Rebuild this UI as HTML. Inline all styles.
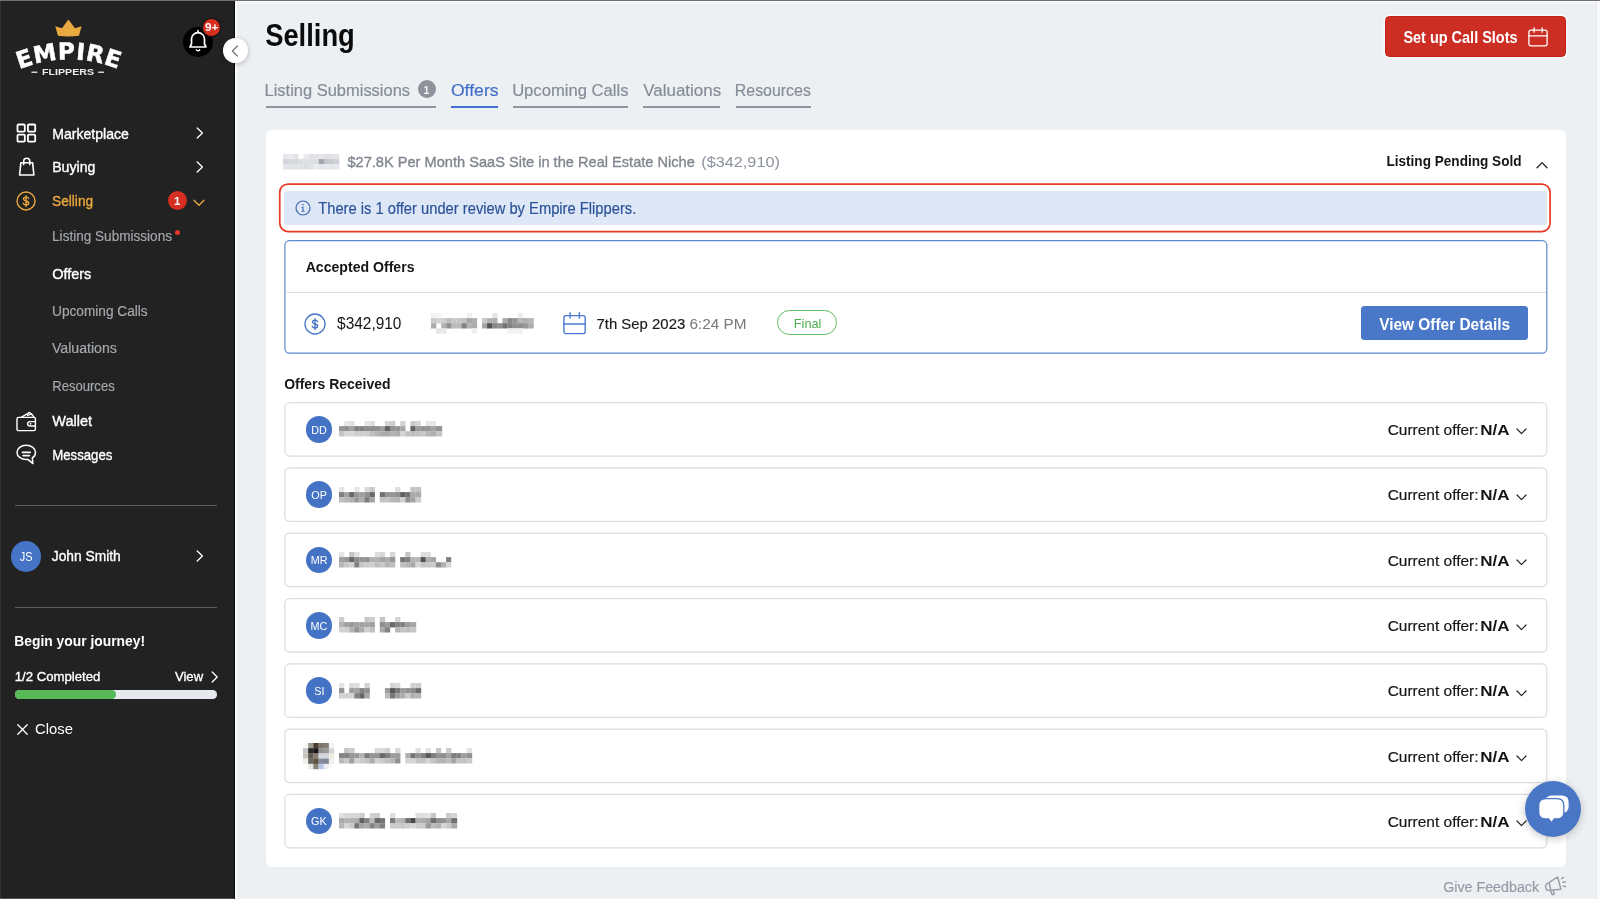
<!DOCTYPE html>
<html lang="en">
<head>
<meta charset="utf-8">
<title>Selling - Offers</title>
<style>
*{box-sizing:border-box;margin:0;padding:0}
html,body{width:1600px;height:899px;overflow:hidden;background:#edf0f3;font-family:"Liberation Sans",sans-serif;color:#111}
body{position:relative}
.abs{position:absolute}
svg{position:absolute;overflow:visible}
.t{position:absolute;white-space:nowrap;line-height:20px;height:20px;transform-origin:0 50%}
#txt{position:absolute;left:0;top:0;width:1600px;height:899px;will-change:transform;z-index:7}
#topline{position:absolute;left:0;top:0;width:1600px;height:1px;background:#6e6f72;z-index:50}
#rightstrip{position:absolute;left:1597px;top:1px;width:3px;height:898px;background:#f9f9f9;z-index:40}
#side{position:absolute;left:0;top:0;width:235px;height:899px;background:#222222}
.hr{position:absolute;left:15px;width:202px;height:1px;background:#5b5d5f}
#card{position:absolute;left:266px;top:130px;width:1300px;height:737.3px;background:#fff;border-radius:6px}
.tabline{position:absolute;height:2.1px;background:#9096a0;top:105.9px}
.row{position:absolute;left:284.3px;width:1263px;height:54.7px;border:1px solid #d9dce2;border-radius:5px;background:#fff}
.av{position:absolute;width:26.4px;height:26.4px;border-radius:50%;background:#4472c4}
.px{position:absolute;filter:blur(1.2px)}
</style>
</head>
<body>
<div id="side">
<div class="abs" style="left:0;top:0;width:1px;height:899px;background:#333"></div>
<!-- logo -->
<svg style="left:10px;top:14px;will-change:transform" width="120" height="68" viewBox="10 14 120 68">
  <path d="M58 35.7 L55.2 26.2 L62 28.2 L68.4 19.6 L75 28.2 L81.6 26.2 L79 35.7 Q68.5 37.2 58 35.7 Z" fill="#eaa840"/>
  <path id="arc" d="M17 70.2 Q68.9 48.6 120.8 70.2" fill="none"/>
  <text font-family="DejaVu Sans, Liberation Sans, sans-serif" font-weight="bold" font-size="23.2" fill="#fff" stroke="#fff" stroke-width="0.5" letter-spacing="0.6"><textPath href="#arc" startOffset="50%" text-anchor="middle">EMPIRE</textPath></text>
  <rect x="31.4" y="71.6" width="6" height="1.5" rx="0.5" fill="#d2d2d2"/>
  <rect x="98.1" y="71.6" width="6" height="1.5" rx="0.5" fill="#d2d2d2"/>
</svg>
<!-- bell -->
<div class="abs" style="left:183px;top:27px;width:30px;height:30px;border-radius:50%;background:#000"></div>
<svg style="left:188px;top:29px" width="20" height="24" viewBox="0 0 20 24" fill="none" stroke="#fff" stroke-width="1.7" stroke-linecap="round" stroke-linejoin="round">
  <path d="M10 1.7 V3 M3.5 15 V10.1 A6.5 6.5 0 0 1 16.5 10.1 V15 L18 18 H2 Z" fill="#000"/>
  <path d="M8.4 20.9 Q10 22.6 11.6 20.9" stroke-width="1.5"/>
</svg>
<div class="abs" style="left:202.9px;top:18.5px;width:17.4px;height:17.4px;border-radius:50%;background:#d8301f;box-shadow:0 0 0 1.3px #161616"></div>
<!-- nav icons -->
<svg style="left:16px;top:123.4px" width="21" height="20" viewBox="0 0 21 20" fill="none" stroke="#fff" stroke-width="1.8">
  <rect x="1.5" y="1.5" width="7.3" height="7.2" rx="0.9"/><rect x="11.9" y="1.5" width="7.3" height="7.2" rx="0.9"/>
  <rect x="1.5" y="11.7" width="7.3" height="7.0" rx="0.9"/><rect x="11.9" y="11.7" width="7.3" height="7.0" rx="0.9"/>
</svg>
<svg style="left:18px;top:156px" width="18" height="21" viewBox="0 0 18 21" fill="none" stroke="#fff" stroke-width="1.6" stroke-linejoin="round" stroke-linecap="round">
  <path d="M2.9 6.7 H14.6 L15.9 19 H1.6 Z"/>
  <path d="M5.7 8.6 V5.2 C5.7 3.2 6.9 2.2 8.75 2.2 C10.6 2.2 11.8 3.2 11.8 5.2 V8.6"/>
</svg>
<svg style="left:16px;top:190.5px" width="20" height="20" viewBox="0 0 20 20" fill="none" stroke="#eaa93f" stroke-width="1.4" stroke-linecap="round">
  <circle cx="10.05" cy="10" r="9"/>
  <path d="M12.6 7.6 C12.2 6.6 11.3 6.1 10 6.1 C8.5 6.1 7.5 6.9 7.5 8 C7.5 9.2 8.5 9.6 10 10 C11.6 10.4 12.7 10.9 12.7 12.1 C12.7 13.3 11.6 14 10 14 C8.6 14 7.6 13.4 7.2 12.3 M10 4.7 V15.5"/>
</svg>
<!-- chevrons -->
<svg style="left:196.35px;top:127.15px" width="8" height="12" viewBox="0 0 8 12" fill="none" stroke="#fff" stroke-width="1.3" stroke-linecap="round" stroke-linejoin="round"><path d="M1.2 1 L6.4 6 L1.2 11"/></svg>
<svg style="left:196.35px;top:160.9px" width="8" height="12" viewBox="0 0 8 12" fill="none" stroke="#fff" stroke-width="1.3" stroke-linecap="round" stroke-linejoin="round"><path d="M1.2 1 L6.4 6 L1.2 11"/></svg>
<div class="abs" style="left:167.8px;top:190.9px;width:19.4px;height:19.4px;border-radius:50%;background:#d62e20"></div>
<svg style="left:192.75px;top:198.85px" width="12" height="8" viewBox="0 0 12 8" fill="none" stroke="#eaa93f" stroke-width="1.3" stroke-linecap="round" stroke-linejoin="round"><path d="M1 1.2 L6 6.2 L11 1.2"/></svg>
<div class="abs" style="left:175px;top:230.1px;width:5px;height:5px;border-radius:50%;background:#e8392c"></div>
<!-- wallet -->
<svg style="left:16px;top:410.5px" width="21" height="21" viewBox="0 0 21 21" fill="none" stroke="#fff" stroke-width="1.4" stroke-linejoin="round" stroke-linecap="round">
  <path d="M2.6 6.4 H17.8 Q19.4 6.4 19.4 8 V18 Q19.4 19.6 17.8 19.6 H2.6 Q1 19.6 1 18 V8 Q1 6.4 2.6 6.4 Z"/>
  <path d="M5.6 6.2 L13.6 1.4 L15.4 3.4 M11.6 4.4 L15.6 2.8 L18 6.2"/>
  <path d="M19.4 10.6 H14 Q11.6 10.6 11.6 12.8 Q11.6 15 14 15 H19.4"/>
  <circle cx="14.6" cy="12.8" r="0.9" fill="#fff" stroke="none"/>
</svg>
<!-- messages -->
<svg style="left:16px;top:443.6px" width="21" height="21" viewBox="0 0 21 21" fill="none" stroke="#fff" stroke-width="1.5" stroke-linejoin="round" stroke-linecap="round">
  <path d="M10.2 1.3 C15.4 1.3 19.5 4.4 19.5 8.4 C19.5 10.8 18.3 12.6 16.3 13.9 L16.9 19.6 L11.9 15.4 C11.3 15.5 10.8 15.5 10.2 15.5 C5 15.5 1 12.4 1 8.4 C1 4.4 5 1.3 10.2 1.3 Z"/>
  <path d="M6.4 8.4 H14.2 M7 11.6 H13.4" stroke-width="1.6"/>
</svg>
<div class="hr" style="top:505px"></div>
<div class="abs" style="left:10.8px;top:541.3px;width:30.4px;height:30.4px;border-radius:50%;background:#4573c5"></div>
<svg style="left:196.35px;top:549.9px" width="8" height="12" viewBox="0 0 8 12" fill="none" stroke="#fff" stroke-width="1.3" stroke-linecap="round" stroke-linejoin="round"><path d="M1.2 1 L6.4 6 L1.2 11"/></svg>
<div class="hr" style="top:606.5px"></div>
<svg style="left:210.65px;top:671.15px" width="8" height="12" viewBox="0 0 8 12" fill="none" stroke="#fff" stroke-width="1.3" stroke-linecap="round" stroke-linejoin="round"><path d="M1.2 1 L6.2 6 L1.2 11"/></svg>
<div class="abs" style="left:14.8px;top:690.3px;width:202.2px;height:8.5px;border-radius:4.3px;background:#e6e9ed"></div>
<div class="abs" style="left:14.8px;top:690.3px;width:101px;height:8.5px;border-radius:4.3px;background:#58b957"></div>
<svg style="left:16.65px;top:724.15px" width="11" height="11" viewBox="0 0 11 11" fill="none" stroke="#fff" stroke-width="1.3" stroke-linecap="round"><path d="M0.8 0.8 L10.2 10.2 M10.2 0.8 L0.8 10.2"/></svg>
</div>
<div class="abs" style="left:233.9px;top:0;width:1px;height:899px;background:#0a0a0a"></div>
<div class="abs" style="left:234.9px;top:0;width:2px;height:899px;background:#fcfdfd"></div>
<!-- collapse button -->
<div class="abs" style="left:223.1px;top:38.3px;width:24.6px;height:24.6px;border-radius:50%;background:#fff;box-shadow:0 1px 5px rgba(0,0,0,.28);z-index:5"></div>
<svg style="left:231.2px;top:44.5px;z-index:6" width="8" height="12" viewBox="0 0 8 12" fill="none" stroke="#777" stroke-width="1.25" stroke-linecap="round" stroke-linejoin="round"><path d="M6.4 1 L1.4 6 L6.4 11"/></svg>
<div id="main">
<!-- top button -->
<div class="abs" style="left:1385.1px;top:15.8px;width:180.8px;height:41px;border-radius:4.5px;background:#cc2e24;border:1px solid #c62012;box-shadow:0 0 0 1.6px rgba(245,255,255,.8)"></div>
<svg style="left:1527.8px;top:26.6px" width="20" height="20" viewBox="0 0 20 20" fill="none" stroke="#fff" stroke-width="1.3" stroke-linecap="round" stroke-linejoin="round">
  <rect x="0.9" y="3.1" width="18.2" height="15.7" rx="2"/><path d="M0.9 8.9 H19.1 M6.1 0.8 V5.2 M14.2 0.8 V5.2"/>
</svg>
<!-- tabs underline -->
<div class="tabline" style="left:266px;width:170.2px"></div>
<div class="tabline" style="left:451.1px;width:47.2px;background:#4170cf"></div>
<div class="tabline" style="left:513.4px;width:114.6px"></div>
<div class="tabline" style="left:643.3px;width:77.2px"></div>
<div class="tabline" style="left:735.8px;width:75.2px"></div>
<div class="abs" style="left:417.5px;top:80.1px;width:18.2px;height:18.2px;border-radius:50%;background:#8d929b"></div>
<div id="card"></div>
<!-- listing thumbnail (blurred) -->
<svg style="left:282.8px;top:154.1px;filter:blur(0.4px)" width="56.2" height="15.3" viewBox="0 0 56.2 15.3"><rect x="0.0" y="0.0" width="5.3" height="5.3" fill="rgb(230,232,237)"/><rect x="5.1" y="0.0" width="5.3" height="5.3" fill="rgb(232,234,239)"/><rect x="10.2" y="0.0" width="5.3" height="5.3" fill="rgb(226,228,233)"/><rect x="20.4" y="0.0" width="5.3" height="5.3" fill="rgb(234,236,241)"/><rect x="25.5" y="0.0" width="5.3" height="5.3" fill="rgb(222,224,229)"/><rect x="30.6" y="0.0" width="5.3" height="5.3" fill="rgb(223,225,230)"/><rect x="35.7" y="0.0" width="5.3" height="5.3" fill="rgb(227,229,234)"/><rect x="40.8" y="0.0" width="5.3" height="5.3" fill="rgb(223,225,230)"/><rect x="45.9" y="0.0" width="5.3" height="5.3" fill="rgb(223,225,230)"/><rect x="51.0" y="0.0" width="5.4" height="5.3" fill="rgb(225,227,232)"/><rect x="0.0" y="5.1" width="5.3" height="5.3" fill="rgb(212,214,219)"/><rect x="5.1" y="5.1" width="5.3" height="5.3" fill="rgb(214,216,221)"/><rect x="10.2" y="5.1" width="5.3" height="5.3" fill="rgb(214,216,221)"/><rect x="15.3" y="5.1" width="5.3" height="5.3" fill="rgb(219,221,226)"/><rect x="20.4" y="5.1" width="5.3" height="5.3" fill="rgb(221,223,228)"/><rect x="25.5" y="5.1" width="5.3" height="5.3" fill="rgb(222,224,229)"/><rect x="30.6" y="5.1" width="5.3" height="5.3" fill="rgb(222,224,229)"/><rect x="35.7" y="5.1" width="5.3" height="5.3" fill="rgb(163,165,170)"/><rect x="40.8" y="5.1" width="5.3" height="5.3" fill="rgb(195,197,202)"/><rect x="45.9" y="5.1" width="5.3" height="5.3" fill="rgb(202,204,209)"/><rect x="51.0" y="5.1" width="5.4" height="5.3" fill="rgb(208,210,215)"/><rect x="0.0" y="10.2" width="5.3" height="5.3" fill="rgb(226,228,233)"/><rect x="5.1" y="10.2" width="5.3" height="5.3" fill="rgb(223,225,230)"/><rect x="10.2" y="10.2" width="5.3" height="5.3" fill="rgb(224,226,231)"/><rect x="15.3" y="10.2" width="5.3" height="5.3" fill="rgb(223,225,230)"/><rect x="20.4" y="10.2" width="5.3" height="5.3" fill="rgb(218,220,225)"/><rect x="25.5" y="10.2" width="5.3" height="5.3" fill="rgb(223,225,230)"/><rect x="30.6" y="10.2" width="5.3" height="5.3" fill="rgb(234,236,241)"/><rect x="35.7" y="10.2" width="5.3" height="5.3" fill="rgb(228,230,235)"/><rect x="40.8" y="10.2" width="5.3" height="5.3" fill="rgb(230,232,237)"/><rect x="45.9" y="10.2" width="5.3" height="5.3" fill="rgb(228,230,235)"/><rect x="51.0" y="10.2" width="5.4" height="5.3" fill="rgb(231,233,238)"/></svg>
<svg style="left:1535.75px;top:160.65px" width="12" height="8" viewBox="0 0 12 8" fill="none" stroke="#222" stroke-width="1.3" stroke-linecap="round" stroke-linejoin="round"><path d="M1 6.8 L6 1.6 L11 6.8"/></svg>
<!-- red outlined alert -->
<svg style="left:0;top:0" width="1600" height="899" viewBox="0 0 1600 899" fill="none"><rect x="279.75" y="184.05" width="1270.3" height="47.5" rx="8.2" stroke="#e83a24" stroke-width="1.7"/></svg>
<div class="abs" style="left:284.3px;top:191.3px;width:1262.4px;height:33.55px;border-radius:3.5px;background:#dee7f6"></div>
<svg style="left:294.9px;top:200px" width="16" height="16" viewBox="0 0 16 16" fill="none" stroke="#3f68b1" stroke-width="1.2" stroke-linecap="round"><circle cx="8" cy="8" r="7"/><path d="M8 7.3 V11.2 M7 7.3 H8 M7 11.3 H9.1" stroke-width="1.1"/><circle cx="7.9" cy="4.8" r="0.8" fill="#3f68b1" stroke="none"/></svg>
<!-- accepted offers box -->
<svg style="left:0;top:0" width="1600" height="899" viewBox="0 0 1600 899" fill="none"><rect x="284.9" y="240.55" width="1261.9" height="112.6" rx="4.6" stroke="#5c87d2" stroke-width="1.2" fill="#fff"/></svg>
<div class="abs" style="left:285.3px;top:292px;width:1261px;height:1px;background:#dadde3"></div>
<svg style="left:303.8px;top:312.5px" width="22" height="22" viewBox="0 0 22 22" fill="none" stroke="#4573c8" stroke-width="1.3" stroke-linecap="round">
  <circle cx="11" cy="11" r="10"/>
  <path d="M13.6 8.6 C13.2 7.6 12.3 7.1 11 7.1 C9.5 7.1 8.5 7.9 8.5 9 C8.5 10.2 9.5 10.6 11 11 C12.6 11.4 13.7 11.9 13.7 13.1 C13.7 14.3 12.6 15 11 15 C9.6 15 8.6 14.4 8.2 13.3 M11 5.6 V16.5"/>
</svg>
<svg style="left:431.4px;top:313.2px;filter:blur(0.5px)" width="102.6" height="20.4" viewBox="0 0 102.6 20.4"><rect x="0.0" y="0.0" width="5.3" height="5.3" fill="rgb(242,242,242)"/><rect x="5.1" y="0.0" width="5.3" height="5.3" fill="rgb(244,244,244)"/><rect x="35.7" y="0.0" width="5.3" height="5.3" fill="rgb(240,240,240)"/><rect x="61.2" y="0.0" width="5.3" height="5.3" fill="rgb(229,229,229)"/><rect x="86.7" y="0.0" width="5.3" height="5.3" fill="rgb(236,236,236)"/><rect x="0.0" y="5.1" width="5.3" height="5.3" fill="rgb(203,203,203)"/><rect x="5.1" y="5.1" width="5.3" height="5.3" fill="rgb(210,210,210)"/><rect x="10.2" y="5.1" width="5.3" height="5.3" fill="rgb(205,205,205)"/><rect x="15.3" y="5.1" width="5.3" height="5.3" fill="rgb(188,188,188)"/><rect x="20.4" y="5.1" width="5.3" height="5.3" fill="rgb(198,198,198)"/><rect x="25.5" y="5.1" width="5.3" height="5.3" fill="rgb(197,197,197)"/><rect x="30.6" y="5.1" width="5.3" height="5.3" fill="rgb(191,191,191)"/><rect x="35.7" y="5.1" width="5.3" height="5.3" fill="rgb(166,166,166)"/><rect x="40.8" y="5.1" width="5.3" height="5.3" fill="rgb(175,175,175)"/><rect x="51.0" y="5.1" width="5.3" height="5.3" fill="rgb(201,201,201)"/><rect x="56.1" y="5.1" width="5.3" height="5.3" fill="rgb(178,178,178)"/><rect x="61.2" y="5.1" width="5.3" height="5.3" fill="rgb(175,175,175)"/><rect x="71.4" y="5.1" width="5.3" height="5.3" fill="rgb(172,172,172)"/><rect x="76.5" y="5.1" width="5.3" height="5.3" fill="rgb(136,136,136)"/><rect x="81.6" y="5.1" width="5.3" height="5.3" fill="rgb(151,151,151)"/><rect x="86.7" y="5.1" width="5.3" height="5.3" fill="rgb(182,182,182)"/><rect x="91.8" y="5.1" width="5.3" height="5.3" fill="rgb(175,175,175)"/><rect x="96.9" y="5.1" width="5.9" height="5.3" fill="rgb(183,183,183)"/><rect x="0.0" y="10.2" width="5.3" height="5.3" fill="rgb(173,173,173)"/><rect x="10.2" y="10.2" width="5.3" height="5.3" fill="rgb(175,175,175)"/><rect x="15.3" y="10.2" width="5.3" height="5.3" fill="rgb(143,143,143)"/><rect x="20.4" y="10.2" width="5.3" height="5.3" fill="rgb(185,185,185)"/><rect x="25.5" y="10.2" width="5.3" height="5.3" fill="rgb(185,185,185)"/><rect x="30.6" y="10.2" width="5.3" height="5.3" fill="rgb(131,131,131)"/><rect x="35.7" y="10.2" width="5.3" height="5.3" fill="rgb(178,178,178)"/><rect x="40.8" y="10.2" width="5.3" height="5.3" fill="rgb(172,172,172)"/><rect x="51.0" y="10.2" width="5.3" height="5.3" fill="rgb(165,165,165)"/><rect x="56.1" y="10.2" width="5.3" height="5.3" fill="rgb(82,82,82)"/><rect x="61.2" y="10.2" width="5.3" height="5.3" fill="rgb(135,135,135)"/><rect x="66.3" y="10.2" width="5.3" height="5.3" fill="rgb(144,144,144)"/><rect x="71.4" y="10.2" width="5.3" height="5.3" fill="rgb(113,113,113)"/><rect x="76.5" y="10.2" width="5.3" height="5.3" fill="rgb(129,129,129)"/><rect x="81.6" y="10.2" width="5.3" height="5.3" fill="rgb(144,144,144)"/><rect x="86.7" y="10.2" width="5.3" height="5.3" fill="rgb(143,143,143)"/><rect x="91.8" y="10.2" width="5.3" height="5.3" fill="rgb(150,150,150)"/><rect x="96.9" y="10.2" width="5.9" height="5.3" fill="rgb(173,173,173)"/><rect x="5.1" y="15.3" width="5.3" height="5.3" fill="rgb(231,231,231)"/><rect x="10.2" y="15.3" width="5.3" height="5.3" fill="rgb(232,232,232)"/><rect x="40.8" y="15.3" width="5.3" height="5.3" fill="rgb(239,239,239)"/><rect x="76.5" y="15.3" width="5.3" height="5.3" fill="rgb(241,241,241)"/><rect x="81.6" y="15.3" width="5.3" height="5.3" fill="rgb(241,241,241)"/><rect x="86.7" y="15.3" width="5.3" height="5.3" fill="rgb(242,242,242)"/></svg>
<svg style="left:562.6px;top:311.8px" width="23" height="23" viewBox="0 0 23 23" fill="none" stroke="#4a7ad0" stroke-width="1.4" stroke-linecap="round" stroke-linejoin="round">
  <rect x="0.9" y="3.6" width="21.3" height="18" rx="2.2"/><path d="M0.9 12 H22.2 M7.1 0.8 V6 M16.4 0.8 V6"/>
</svg>
<div class="abs" style="left:777.4px;top:310.25px;width:59.5px;height:25.15px;border:1px solid #62bd64;border-radius:13px"></div>
<div class="abs" style="left:1360.8px;top:305.9px;width:167.7px;height:33.7px;border-radius:3.5px;background:#4a78c8"></div>
<!-- offer rows inserted by generator -->
<svg style="left:0;top:0" width="1600" height="899" viewBox="0 0 1600 899"><rect x="284.9" y="402.60" width="1261.9" height="53.5" rx="4.6" stroke="#d9dce3" stroke-width="1.2" fill="#fff"/></svg>
<div class="av" style="left:305.85px;top:416.15000000000003px"></div>
<svg style="left:339.2px;top:421.2px;filter:blur(0.5px)" width="103" height="15.3" viewBox="0 0 103 15.3"><rect x="5.1" y="0.0" width="5.3" height="5.3" fill="rgb(231,231,231)"/><rect x="10.2" y="0.0" width="5.3" height="5.3" fill="rgb(224,224,224)"/><rect x="25.5" y="0.0" width="5.3" height="5.3" fill="rgb(228,228,228)"/><rect x="30.6" y="0.0" width="5.3" height="5.3" fill="rgb(223,223,223)"/><rect x="45.9" y="0.0" width="5.3" height="5.3" fill="rgb(213,213,213)"/><rect x="51.0" y="0.0" width="5.3" height="5.3" fill="rgb(206,206,206)"/><rect x="61.2" y="0.0" width="5.3" height="5.3" fill="rgb(210,210,210)"/><rect x="71.4" y="0.0" width="5.3" height="5.3" fill="rgb(202,202,202)"/><rect x="76.5" y="0.0" width="5.3" height="5.3" fill="rgb(214,214,214)"/><rect x="86.7" y="0.0" width="5.3" height="5.3" fill="rgb(230,230,230)"/><rect x="91.8" y="0.0" width="5.3" height="5.3" fill="rgb(231,231,231)"/><rect x="0.0" y="5.1" width="5.3" height="5.3" fill="rgb(151,151,151)"/><rect x="5.1" y="5.1" width="5.3" height="5.3" fill="rgb(144,144,144)"/><rect x="10.2" y="5.1" width="5.3" height="5.3" fill="rgb(161,161,161)"/><rect x="15.3" y="5.1" width="5.3" height="5.3" fill="rgb(128,128,128)"/><rect x="20.4" y="5.1" width="5.3" height="5.3" fill="rgb(129,129,129)"/><rect x="25.5" y="5.1" width="5.3" height="5.3" fill="rgb(138,138,138)"/><rect x="30.6" y="5.1" width="5.3" height="5.3" fill="rgb(140,140,140)"/><rect x="35.7" y="5.1" width="5.3" height="5.3" fill="rgb(142,142,142)"/><rect x="40.8" y="5.1" width="5.3" height="5.3" fill="rgb(159,159,159)"/><rect x="45.9" y="5.1" width="5.3" height="5.3" fill="rgb(97,97,97)"/><rect x="51.0" y="5.1" width="5.3" height="5.3" fill="rgb(146,146,146)"/><rect x="56.1" y="5.1" width="5.3" height="5.3" fill="rgb(150,150,150)"/><rect x="61.2" y="5.1" width="5.3" height="5.3" fill="rgb(168,168,168)"/><rect x="71.4" y="5.1" width="5.3" height="5.3" fill="rgb(100,100,100)"/><rect x="76.5" y="5.1" width="5.3" height="5.3" fill="rgb(154,154,154)"/><rect x="81.6" y="5.1" width="5.3" height="5.3" fill="rgb(147,147,147)"/><rect x="86.7" y="5.1" width="5.3" height="5.3" fill="rgb(150,150,150)"/><rect x="91.8" y="5.1" width="5.3" height="5.3" fill="rgb(165,165,165)"/><rect x="96.9" y="5.1" width="6.3" height="5.3" fill="rgb(147,147,147)"/><rect x="0.0" y="10.2" width="5.3" height="5.3" fill="rgb(196,196,196)"/><rect x="5.1" y="10.2" width="5.3" height="5.3" fill="rgb(214,214,214)"/><rect x="10.2" y="10.2" width="5.3" height="5.3" fill="rgb(215,215,215)"/><rect x="15.3" y="10.2" width="5.3" height="5.3" fill="rgb(206,206,206)"/><rect x="20.4" y="10.2" width="5.3" height="5.3" fill="rgb(207,207,207)"/><rect x="25.5" y="10.2" width="5.3" height="5.3" fill="rgb(205,205,205)"/><rect x="30.6" y="10.2" width="5.3" height="5.3" fill="rgb(192,192,192)"/><rect x="35.7" y="10.2" width="5.3" height="5.3" fill="rgb(181,181,181)"/><rect x="40.8" y="10.2" width="5.3" height="5.3" fill="rgb(171,171,171)"/><rect x="45.9" y="10.2" width="5.3" height="5.3" fill="rgb(172,172,172)"/><rect x="51.0" y="10.2" width="5.3" height="5.3" fill="rgb(179,179,179)"/><rect x="56.1" y="10.2" width="5.3" height="5.3" fill="rgb(171,171,171)"/><rect x="61.2" y="10.2" width="5.3" height="5.3" fill="rgb(212,212,212)"/><rect x="66.3" y="10.2" width="5.3" height="5.3" fill="rgb(193,193,193)"/><rect x="71.4" y="10.2" width="5.3" height="5.3" fill="rgb(190,190,190)"/><rect x="76.5" y="10.2" width="5.3" height="5.3" fill="rgb(192,192,192)"/><rect x="81.6" y="10.2" width="5.3" height="5.3" fill="rgb(199,199,199)"/><rect x="86.7" y="10.2" width="5.3" height="5.3" fill="rgb(183,183,183)"/><rect x="91.8" y="10.2" width="5.3" height="5.3" fill="rgb(177,177,177)"/><rect x="96.9" y="10.2" width="6.3" height="5.3" fill="rgb(197,197,197)"/></svg>
<svg style="left:1515.85px;top:428.35px" width="11" height="7" viewBox="0 0 11 7" fill="none" stroke="#222" stroke-width="1.2" stroke-linecap="round" stroke-linejoin="round"><path d="M1 1 L5.5 5.6 L10 1"/></svg>
<svg style="left:0;top:0" width="1600" height="899" viewBox="0 0 1600 899"><rect x="284.9" y="467.85" width="1261.9" height="53.5" rx="4.6" stroke="#d9dce3" stroke-width="1.2" fill="#fff"/></svg>
<div class="av" style="left:305.85px;top:481.40000000000003px"></div>
<svg style="left:339.2px;top:486.5px;filter:blur(0.5px)" width="82" height="15.3" viewBox="0 0 82 15.3"><rect x="0.0" y="0.0" width="5.3" height="5.3" fill="rgb(230,230,230)"/><rect x="15.3" y="0.0" width="5.3" height="5.3" fill="rgb(231,231,231)"/><rect x="25.5" y="0.0" width="5.3" height="5.3" fill="rgb(218,218,218)"/><rect x="30.6" y="0.0" width="5.3" height="5.3" fill="rgb(200,200,200)"/><rect x="56.1" y="0.0" width="5.3" height="5.3" fill="rgb(223,223,223)"/><rect x="71.4" y="0.0" width="5.3" height="5.3" fill="rgb(195,195,195)"/><rect x="76.5" y="0.0" width="5.7" height="5.3" fill="rgb(196,196,196)"/><rect x="0.0" y="5.1" width="5.3" height="5.3" fill="rgb(126,126,126)"/><rect x="5.1" y="5.1" width="5.3" height="5.3" fill="rgb(162,162,162)"/><rect x="10.2" y="5.1" width="5.3" height="5.3" fill="rgb(104,104,104)"/><rect x="15.3" y="5.1" width="5.3" height="5.3" fill="rgb(151,151,151)"/><rect x="20.4" y="5.1" width="5.3" height="5.3" fill="rgb(160,160,160)"/><rect x="25.5" y="5.1" width="5.3" height="5.3" fill="rgb(143,143,143)"/><rect x="30.6" y="5.1" width="5.3" height="5.3" fill="rgb(106,106,106)"/><rect x="40.8" y="5.1" width="5.3" height="5.3" fill="rgb(113,113,113)"/><rect x="45.9" y="5.1" width="5.3" height="5.3" fill="rgb(148,148,148)"/><rect x="51.0" y="5.1" width="5.3" height="5.3" fill="rgb(149,149,149)"/><rect x="56.1" y="5.1" width="5.3" height="5.3" fill="rgb(145,145,145)"/><rect x="61.2" y="5.1" width="5.3" height="5.3" fill="rgb(96,96,96)"/><rect x="66.3" y="5.1" width="5.3" height="5.3" fill="rgb(113,113,113)"/><rect x="71.4" y="5.1" width="5.3" height="5.3" fill="rgb(168,168,168)"/><rect x="76.5" y="5.1" width="5.7" height="5.3" fill="rgb(171,171,171)"/><rect x="0.0" y="10.2" width="5.3" height="5.3" fill="rgb(190,190,190)"/><rect x="5.1" y="10.2" width="5.3" height="5.3" fill="rgb(182,182,182)"/><rect x="10.2" y="10.2" width="5.3" height="5.3" fill="rgb(174,174,174)"/><rect x="15.3" y="10.2" width="5.3" height="5.3" fill="rgb(151,151,151)"/><rect x="20.4" y="10.2" width="5.3" height="5.3" fill="rgb(172,172,172)"/><rect x="25.5" y="10.2" width="5.3" height="5.3" fill="rgb(122,122,122)"/><rect x="30.6" y="10.2" width="5.3" height="5.3" fill="rgb(163,163,163)"/><rect x="40.8" y="10.2" width="5.3" height="5.3" fill="rgb(194,194,194)"/><rect x="45.9" y="10.2" width="5.3" height="5.3" fill="rgb(197,197,197)"/><rect x="51.0" y="10.2" width="5.3" height="5.3" fill="rgb(184,184,184)"/><rect x="56.1" y="10.2" width="5.3" height="5.3" fill="rgb(180,180,180)"/><rect x="61.2" y="10.2" width="5.3" height="5.3" fill="rgb(208,208,208)"/><rect x="66.3" y="10.2" width="5.3" height="5.3" fill="rgb(144,144,144)"/><rect x="71.4" y="10.2" width="5.3" height="5.3" fill="rgb(162,162,162)"/><rect x="76.5" y="10.2" width="5.7" height="5.3" fill="rgb(203,203,203)"/></svg>
<svg style="left:1515.85px;top:493.60px" width="11" height="7" viewBox="0 0 11 7" fill="none" stroke="#222" stroke-width="1.2" stroke-linecap="round" stroke-linejoin="round"><path d="M1 1 L5.5 5.6 L10 1"/></svg>
<svg style="left:0;top:0" width="1600" height="899" viewBox="0 0 1600 899"><rect x="284.9" y="533.10" width="1261.9" height="53.5" rx="4.6" stroke="#d9dce3" stroke-width="1.2" fill="#fff"/></svg>
<div class="av" style="left:305.85px;top:546.65px"></div>
<svg style="left:339.2px;top:551.8px;filter:blur(0.5px)" width="112" height="15.3" viewBox="0 0 112 15.3"><rect x="0.0" y="0.0" width="5.3" height="5.3" fill="rgb(228,228,228)"/><rect x="10.2" y="0.0" width="5.3" height="5.3" fill="rgb(195,195,195)"/><rect x="15.3" y="0.0" width="5.3" height="5.3" fill="rgb(224,224,224)"/><rect x="35.7" y="0.0" width="5.3" height="5.3" fill="rgb(223,223,223)"/><rect x="40.8" y="0.0" width="5.3" height="5.3" fill="rgb(215,215,215)"/><rect x="51.0" y="0.0" width="5.3" height="5.3" fill="rgb(216,216,216)"/><rect x="66.3" y="0.0" width="5.3" height="5.3" fill="rgb(198,198,198)"/><rect x="81.6" y="0.0" width="5.3" height="5.3" fill="rgb(222,222,222)"/><rect x="86.7" y="0.0" width="5.3" height="5.3" fill="rgb(222,222,222)"/><rect x="0.0" y="5.1" width="5.3" height="5.3" fill="rgb(160,160,160)"/><rect x="5.1" y="5.1" width="5.3" height="5.3" fill="rgb(150,150,150)"/><rect x="10.2" y="5.1" width="5.3" height="5.3" fill="rgb(101,101,101)"/><rect x="15.3" y="5.1" width="5.3" height="5.3" fill="rgb(137,137,137)"/><rect x="20.4" y="5.1" width="5.3" height="5.3" fill="rgb(148,148,148)"/><rect x="25.5" y="5.1" width="5.3" height="5.3" fill="rgb(144,144,144)"/><rect x="30.6" y="5.1" width="5.3" height="5.3" fill="rgb(176,176,176)"/><rect x="35.7" y="5.1" width="5.3" height="5.3" fill="rgb(177,177,177)"/><rect x="40.8" y="5.1" width="5.3" height="5.3" fill="rgb(164,164,164)"/><rect x="45.9" y="5.1" width="5.3" height="5.3" fill="rgb(173,173,173)"/><rect x="51.0" y="5.1" width="5.3" height="5.3" fill="rgb(150,150,150)"/><rect x="61.2" y="5.1" width="5.3" height="5.3" fill="rgb(116,116,116)"/><rect x="66.3" y="5.1" width="5.3" height="5.3" fill="rgb(127,127,127)"/><rect x="71.4" y="5.1" width="5.3" height="5.3" fill="rgb(179,179,179)"/><rect x="76.5" y="5.1" width="5.3" height="5.3" fill="rgb(184,184,184)"/><rect x="81.6" y="5.1" width="5.3" height="5.3" fill="rgb(84,84,84)"/><rect x="86.7" y="5.1" width="5.3" height="5.3" fill="rgb(174,174,174)"/><rect x="91.8" y="5.1" width="5.3" height="5.3" fill="rgb(165,165,165)"/><rect x="107.1" y="5.1" width="5.1" height="5.3" fill="rgb(126,126,126)"/><rect x="0.0" y="10.2" width="5.3" height="5.3" fill="rgb(182,182,182)"/><rect x="5.1" y="10.2" width="5.3" height="5.3" fill="rgb(198,198,198)"/><rect x="10.2" y="10.2" width="5.3" height="5.3" fill="rgb(208,208,208)"/><rect x="15.3" y="10.2" width="5.3" height="5.3" fill="rgb(128,128,128)"/><rect x="20.4" y="10.2" width="5.3" height="5.3" fill="rgb(197,197,197)"/><rect x="25.5" y="10.2" width="5.3" height="5.3" fill="rgb(204,204,204)"/><rect x="30.6" y="10.2" width="5.3" height="5.3" fill="rgb(206,206,206)"/><rect x="35.7" y="10.2" width="5.3" height="5.3" fill="rgb(189,189,189)"/><rect x="40.8" y="10.2" width="5.3" height="5.3" fill="rgb(200,200,200)"/><rect x="45.9" y="10.2" width="5.3" height="5.3" fill="rgb(181,181,181)"/><rect x="51.0" y="10.2" width="5.3" height="5.3" fill="rgb(190,190,190)"/><rect x="61.2" y="10.2" width="5.3" height="5.3" fill="rgb(188,188,188)"/><rect x="66.3" y="10.2" width="5.3" height="5.3" fill="rgb(181,181,181)"/><rect x="71.4" y="10.2" width="5.3" height="5.3" fill="rgb(167,167,167)"/><rect x="76.5" y="10.2" width="5.3" height="5.3" fill="rgb(215,215,215)"/><rect x="81.6" y="10.2" width="5.3" height="5.3" fill="rgb(196,196,196)"/><rect x="86.7" y="10.2" width="5.3" height="5.3" fill="rgb(199,199,199)"/><rect x="91.8" y="10.2" width="5.3" height="5.3" fill="rgb(203,203,203)"/><rect x="96.9" y="10.2" width="5.3" height="5.3" fill="rgb(142,142,142)"/><rect x="102.0" y="10.2" width="5.3" height="5.3" fill="rgb(175,175,175)"/><rect x="107.1" y="10.2" width="5.1" height="5.3" fill="rgb(213,213,213)"/></svg>
<svg style="left:1515.85px;top:558.85px" width="11" height="7" viewBox="0 0 11 7" fill="none" stroke="#222" stroke-width="1.2" stroke-linecap="round" stroke-linejoin="round"><path d="M1 1 L5.5 5.6 L10 1"/></svg>
<svg style="left:0;top:0" width="1600" height="899" viewBox="0 0 1600 899"><rect x="284.9" y="598.60" width="1261.9" height="53.5" rx="4.6" stroke="#d9dce3" stroke-width="1.2" fill="#fff"/></svg>
<div class="av" style="left:305.85px;top:612.15px"></div>
<svg style="left:339.2px;top:617.2px;filter:blur(0.5px)" width="77" height="15.3" viewBox="0 0 77 15.3"><rect x="0.0" y="0.0" width="5.3" height="5.3" fill="rgb(206,206,206)"/><rect x="25.5" y="0.0" width="5.3" height="5.3" fill="rgb(199,199,199)"/><rect x="30.6" y="0.0" width="5.3" height="5.3" fill="rgb(206,206,206)"/><rect x="40.8" y="0.0" width="5.3" height="5.3" fill="rgb(195,195,195)"/><rect x="56.1" y="0.0" width="5.3" height="5.3" fill="rgb(211,211,211)"/><rect x="0.0" y="5.1" width="5.3" height="5.3" fill="rgb(179,179,179)"/><rect x="5.1" y="5.1" width="5.3" height="5.3" fill="rgb(160,160,160)"/><rect x="10.2" y="5.1" width="5.3" height="5.3" fill="rgb(152,152,152)"/><rect x="15.3" y="5.1" width="5.3" height="5.3" fill="rgb(163,163,163)"/><rect x="20.4" y="5.1" width="5.3" height="5.3" fill="rgb(160,160,160)"/><rect x="25.5" y="5.1" width="5.3" height="5.3" fill="rgb(165,165,165)"/><rect x="30.6" y="5.1" width="5.3" height="5.3" fill="rgb(161,161,161)"/><rect x="40.8" y="5.1" width="5.3" height="5.3" fill="rgb(142,142,142)"/><rect x="45.9" y="5.1" width="5.3" height="5.3" fill="rgb(156,156,156)"/><rect x="51.0" y="5.1" width="5.3" height="5.3" fill="rgb(107,107,107)"/><rect x="56.1" y="5.1" width="5.3" height="5.3" fill="rgb(130,130,130)"/><rect x="61.2" y="5.1" width="5.3" height="5.3" fill="rgb(128,128,128)"/><rect x="66.3" y="5.1" width="5.3" height="5.3" fill="rgb(153,153,153)"/><rect x="71.4" y="5.1" width="5.8" height="5.3" fill="rgb(166,166,166)"/><rect x="0.0" y="10.2" width="5.3" height="5.3" fill="rgb(210,210,210)"/><rect x="5.1" y="10.2" width="5.3" height="5.3" fill="rgb(210,210,210)"/><rect x="10.2" y="10.2" width="5.3" height="5.3" fill="rgb(180,180,180)"/><rect x="15.3" y="10.2" width="5.3" height="5.3" fill="rgb(147,147,147)"/><rect x="20.4" y="10.2" width="5.3" height="5.3" fill="rgb(174,174,174)"/><rect x="25.5" y="10.2" width="5.3" height="5.3" fill="rgb(208,208,208)"/><rect x="30.6" y="10.2" width="5.3" height="5.3" fill="rgb(192,192,192)"/><rect x="40.8" y="10.2" width="5.3" height="5.3" fill="rgb(167,167,167)"/><rect x="45.9" y="10.2" width="5.3" height="5.3" fill="rgb(131,131,131)"/><rect x="56.1" y="10.2" width="5.3" height="5.3" fill="rgb(184,184,184)"/><rect x="61.2" y="10.2" width="5.3" height="5.3" fill="rgb(195,195,195)"/><rect x="66.3" y="10.2" width="5.3" height="5.3" fill="rgb(190,190,190)"/><rect x="71.4" y="10.2" width="5.8" height="5.3" fill="rgb(198,198,198)"/></svg>
<svg style="left:1515.85px;top:624.35px" width="11" height="7" viewBox="0 0 11 7" fill="none" stroke="#222" stroke-width="1.2" stroke-linecap="round" stroke-linejoin="round"><path d="M1 1 L5.5 5.6 L10 1"/></svg>
<svg style="left:0;top:0" width="1600" height="899" viewBox="0 0 1600 899"><rect x="284.9" y="663.85" width="1261.9" height="53.5" rx="4.6" stroke="#d9dce3" stroke-width="1.2" fill="#fff"/></svg>
<div class="av" style="left:305.85px;top:677.4px"></div>
<svg style="left:339.2px;top:682.5px;filter:blur(0.5px)" width="82" height="15.3" viewBox="0 0 82 15.3"><rect x="0.0" y="0.0" width="5.3" height="5.3" fill="rgb(228,228,228)"/><rect x="10.2" y="0.0" width="5.3" height="5.3" fill="rgb(219,219,219)"/><rect x="15.3" y="0.0" width="5.3" height="5.3" fill="rgb(221,221,221)"/><rect x="25.5" y="0.0" width="5.3" height="5.3" fill="rgb(211,211,211)"/><rect x="51.0" y="0.0" width="5.3" height="5.3" fill="rgb(211,211,211)"/><rect x="56.1" y="0.0" width="5.3" height="5.3" fill="rgb(219,219,219)"/><rect x="71.4" y="0.0" width="5.3" height="5.3" fill="rgb(209,209,209)"/><rect x="76.5" y="0.0" width="5.7" height="5.3" fill="rgb(204,204,204)"/><rect x="0.0" y="5.1" width="5.3" height="5.3" fill="rgb(149,149,149)"/><rect x="10.2" y="5.1" width="5.3" height="5.3" fill="rgb(156,156,156)"/><rect x="15.3" y="5.1" width="5.3" height="5.3" fill="rgb(162,162,162)"/><rect x="20.4" y="5.1" width="5.3" height="5.3" fill="rgb(131,131,131)"/><rect x="25.5" y="5.1" width="5.3" height="5.3" fill="rgb(142,142,142)"/><rect x="45.9" y="5.1" width="5.3" height="5.3" fill="rgb(157,157,157)"/><rect x="51.0" y="5.1" width="5.3" height="5.3" fill="rgb(88,88,88)"/><rect x="56.1" y="5.1" width="5.3" height="5.3" fill="rgb(119,119,119)"/><rect x="61.2" y="5.1" width="5.3" height="5.3" fill="rgb(155,155,155)"/><rect x="66.3" y="5.1" width="5.3" height="5.3" fill="rgb(144,144,144)"/><rect x="71.4" y="5.1" width="5.3" height="5.3" fill="rgb(137,137,137)"/><rect x="76.5" y="5.1" width="5.7" height="5.3" fill="rgb(109,109,109)"/><rect x="0.0" y="10.2" width="5.3" height="5.3" fill="rgb(210,210,210)"/><rect x="5.1" y="10.2" width="5.3" height="5.3" fill="rgb(210,210,210)"/><rect x="10.2" y="10.2" width="5.3" height="5.3" fill="rgb(210,210,210)"/><rect x="15.3" y="10.2" width="5.3" height="5.3" fill="rgb(129,129,129)"/><rect x="20.4" y="10.2" width="5.3" height="5.3" fill="rgb(100,100,100)"/><rect x="25.5" y="10.2" width="5.3" height="5.3" fill="rgb(166,166,166)"/><rect x="45.9" y="10.2" width="5.3" height="5.3" fill="rgb(187,187,187)"/><rect x="51.0" y="10.2" width="5.3" height="5.3" fill="rgb(119,119,119)"/><rect x="56.1" y="10.2" width="5.3" height="5.3" fill="rgb(158,158,158)"/><rect x="61.2" y="10.2" width="5.3" height="5.3" fill="rgb(172,172,172)"/><rect x="66.3" y="10.2" width="5.3" height="5.3" fill="rgb(200,200,200)"/><rect x="71.4" y="10.2" width="5.3" height="5.3" fill="rgb(175,175,175)"/><rect x="76.5" y="10.2" width="5.7" height="5.3" fill="rgb(182,182,182)"/></svg>
<svg style="left:1515.85px;top:689.60px" width="11" height="7" viewBox="0 0 11 7" fill="none" stroke="#222" stroke-width="1.2" stroke-linecap="round" stroke-linejoin="round"><path d="M1 1 L5.5 5.6 L10 1"/></svg>
<svg style="left:0;top:0" width="1600" height="899" viewBox="0 0 1600 899"><rect x="284.9" y="729.10" width="1261.9" height="53.5" rx="4.6" stroke="#d9dce3" stroke-width="1.2" fill="#fff"/></svg>
<svg style="left:303px;top:742.9px;filter:blur(0.5px)" width="31" height="26" viewBox="0 0 31 26"><rect x="0.00" y="0.00" width="5.4" height="5.4" fill="#f8f8f8"/><rect x="5.17" y="0.00" width="5.4" height="5.4" fill="#9c978f"/><rect x="10.34" y="0.00" width="5.4" height="5.4" fill="#4a3c2c"/><rect x="15.51" y="0.00" width="5.4" height="5.4" fill="#7d7568"/><rect x="20.68" y="0.00" width="5.4" height="5.4" fill="#857d72"/><rect x="25.85" y="0.00" width="5.4" height="5.4" fill="#f4f4f4"/><rect x="0.00" y="5.20" width="5.4" height="5.4" fill="#c4c4c4"/><rect x="5.17" y="5.20" width="5.4" height="5.4" fill="#2a2a2a"/><rect x="10.34" y="5.20" width="5.4" height="5.4" fill="#161616"/><rect x="15.51" y="5.20" width="5.4" height="5.4" fill="#8f8f92"/><rect x="20.68" y="5.20" width="5.4" height="5.4" fill="#9a9892"/><rect x="25.85" y="5.20" width="5.4" height="5.4" fill="#d6d6d6"/><rect x="0.00" y="10.40" width="5.4" height="5.4" fill="#c9c5be"/><rect x="5.17" y="10.40" width="5.4" height="5.4" fill="#5e5a52"/><rect x="10.34" y="10.40" width="5.4" height="5.4" fill="#857c6e"/><rect x="15.51" y="10.40" width="5.4" height="5.4" fill="#d5d7de"/><rect x="20.68" y="10.40" width="5.4" height="5.4" fill="#d3d5dc"/><rect x="25.85" y="10.40" width="5.4" height="5.4" fill="#efece2"/><rect x="0.00" y="15.60" width="5.4" height="5.4" fill="#efefef"/><rect x="5.17" y="15.60" width="5.4" height="5.4" fill="#6a675f"/><rect x="10.34" y="15.60" width="5.4" height="5.4" fill="#5d5140"/><rect x="15.51" y="15.60" width="5.4" height="5.4" fill="#858b99"/><rect x="20.68" y="15.60" width="5.4" height="5.4" fill="#7e8492"/><rect x="25.85" y="15.60" width="5.4" height="5.4" fill="#f0f0f0"/><rect x="5.17" y="20.80" width="5.4" height="5.4" fill="#e6e6e6"/><rect x="10.34" y="20.80" width="5.4" height="5.4" fill="#8a8478"/><rect x="15.51" y="20.80" width="5.4" height="5.4" fill="#b8c8e8"/><rect x="20.68" y="20.80" width="5.4" height="5.4" fill="#eef0f6"/></svg>
<svg style="left:339.2px;top:747.8px;filter:blur(0.5px)" width="133" height="15.3" viewBox="0 0 133 15.3"><rect x="5.1" y="0.0" width="5.3" height="5.3" fill="rgb(197,197,197)"/><rect x="10.2" y="0.0" width="5.3" height="5.3" fill="rgb(203,203,203)"/><rect x="35.7" y="0.0" width="5.3" height="5.3" fill="rgb(216,216,216)"/><rect x="40.8" y="0.0" width="5.3" height="5.3" fill="rgb(218,218,218)"/><rect x="45.9" y="0.0" width="5.3" height="5.3" fill="rgb(208,208,208)"/><rect x="56.1" y="0.0" width="5.3" height="5.3" fill="rgb(217,217,217)"/><rect x="76.5" y="0.0" width="5.3" height="5.3" fill="rgb(224,224,224)"/><rect x="86.7" y="0.0" width="5.3" height="5.3" fill="rgb(227,227,227)"/><rect x="96.9" y="0.0" width="5.3" height="5.3" fill="rgb(199,199,199)"/><rect x="107.1" y="0.0" width="5.3" height="5.3" fill="rgb(203,203,203)"/><rect x="127.5" y="0.0" width="5.7" height="5.3" fill="rgb(228,228,228)"/><rect x="0.0" y="5.1" width="5.3" height="5.3" fill="rgb(131,131,131)"/><rect x="5.1" y="5.1" width="5.3" height="5.3" fill="rgb(129,129,129)"/><rect x="10.2" y="5.1" width="5.3" height="5.3" fill="rgb(150,150,150)"/><rect x="15.3" y="5.1" width="5.3" height="5.3" fill="rgb(153,153,153)"/><rect x="20.4" y="5.1" width="5.3" height="5.3" fill="rgb(177,177,177)"/><rect x="25.5" y="5.1" width="5.3" height="5.3" fill="rgb(123,123,123)"/><rect x="30.6" y="5.1" width="5.3" height="5.3" fill="rgb(149,149,149)"/><rect x="35.7" y="5.1" width="5.3" height="5.3" fill="rgb(149,149,149)"/><rect x="40.8" y="5.1" width="5.3" height="5.3" fill="rgb(105,105,105)"/><rect x="45.9" y="5.1" width="5.3" height="5.3" fill="rgb(128,128,128)"/><rect x="51.0" y="5.1" width="5.3" height="5.3" fill="rgb(155,155,155)"/><rect x="56.1" y="5.1" width="5.3" height="5.3" fill="rgb(155,155,155)"/><rect x="66.3" y="5.1" width="5.3" height="5.3" fill="rgb(174,174,174)"/><rect x="71.4" y="5.1" width="5.3" height="5.3" fill="rgb(117,117,117)"/><rect x="76.5" y="5.1" width="5.3" height="5.3" fill="rgb(146,146,146)"/><rect x="81.6" y="5.1" width="5.3" height="5.3" fill="rgb(128,128,128)"/><rect x="86.7" y="5.1" width="5.3" height="5.3" fill="rgb(89,89,89)"/><rect x="91.8" y="5.1" width="5.3" height="5.3" fill="rgb(125,125,125)"/><rect x="96.9" y="5.1" width="5.3" height="5.3" fill="rgb(147,147,147)"/><rect x="102.0" y="5.1" width="5.3" height="5.3" fill="rgb(144,144,144)"/><rect x="107.1" y="5.1" width="5.3" height="5.3" fill="rgb(163,163,163)"/><rect x="112.2" y="5.1" width="5.3" height="5.3" fill="rgb(125,125,125)"/><rect x="117.3" y="5.1" width="5.3" height="5.3" fill="rgb(128,128,128)"/><rect x="122.4" y="5.1" width="5.3" height="5.3" fill="rgb(156,156,156)"/><rect x="127.5" y="5.1" width="5.7" height="5.3" fill="rgb(146,146,146)"/><rect x="0.0" y="10.2" width="5.3" height="5.3" fill="rgb(185,185,185)"/><rect x="5.1" y="10.2" width="5.3" height="5.3" fill="rgb(200,200,200)"/><rect x="10.2" y="10.2" width="5.3" height="5.3" fill="rgb(160,160,160)"/><rect x="15.3" y="10.2" width="5.3" height="5.3" fill="rgb(210,210,210)"/><rect x="20.4" y="10.2" width="5.3" height="5.3" fill="rgb(202,202,202)"/><rect x="25.5" y="10.2" width="5.3" height="5.3" fill="rgb(196,196,196)"/><rect x="30.6" y="10.2" width="5.3" height="5.3" fill="rgb(172,172,172)"/><rect x="35.7" y="10.2" width="5.3" height="5.3" fill="rgb(210,210,210)"/><rect x="40.8" y="10.2" width="5.3" height="5.3" fill="rgb(203,203,203)"/><rect x="45.9" y="10.2" width="5.3" height="5.3" fill="rgb(192,192,192)"/><rect x="51.0" y="10.2" width="5.3" height="5.3" fill="rgb(184,184,184)"/><rect x="56.1" y="10.2" width="5.3" height="5.3" fill="rgb(144,144,144)"/><rect x="66.3" y="10.2" width="5.3" height="5.3" fill="rgb(212,212,212)"/><rect x="71.4" y="10.2" width="5.3" height="5.3" fill="rgb(211,211,211)"/><rect x="76.5" y="10.2" width="5.3" height="5.3" fill="rgb(198,198,198)"/><rect x="81.6" y="10.2" width="5.3" height="5.3" fill="rgb(194,194,194)"/><rect x="86.7" y="10.2" width="5.3" height="5.3" fill="rgb(213,213,213)"/><rect x="91.8" y="10.2" width="5.3" height="5.3" fill="rgb(195,195,195)"/><rect x="96.9" y="10.2" width="5.3" height="5.3" fill="rgb(182,182,182)"/><rect x="102.0" y="10.2" width="5.3" height="5.3" fill="rgb(180,180,180)"/><rect x="107.1" y="10.2" width="5.3" height="5.3" fill="rgb(190,190,190)"/><rect x="112.2" y="10.2" width="5.3" height="5.3" fill="rgb(165,165,165)"/><rect x="117.3" y="10.2" width="5.3" height="5.3" fill="rgb(193,193,193)"/><rect x="122.4" y="10.2" width="5.3" height="5.3" fill="rgb(194,194,194)"/><rect x="127.5" y="10.2" width="5.7" height="5.3" fill="rgb(203,203,203)"/></svg>
<svg style="left:1515.85px;top:754.85px" width="11" height="7" viewBox="0 0 11 7" fill="none" stroke="#222" stroke-width="1.2" stroke-linecap="round" stroke-linejoin="round"><path d="M1 1 L5.5 5.6 L10 1"/></svg>
<svg style="left:0;top:0" width="1600" height="899" viewBox="0 0 1600 899"><rect x="284.9" y="794.35" width="1261.9" height="53.5" rx="4.6" stroke="#d9dce3" stroke-width="1.2" fill="#fff"/></svg>
<div class="av" style="left:305.85px;top:807.9px"></div>
<svg style="left:339.2px;top:813.0px;filter:blur(0.5px)" width="118" height="15.3" viewBox="0 0 118 15.3"><rect x="0.0" y="0.0" width="5.3" height="5.3" fill="rgb(225,225,225)"/><rect x="5.1" y="0.0" width="5.3" height="5.3" fill="rgb(217,217,217)"/><rect x="10.2" y="0.0" width="5.3" height="5.3" fill="rgb(214,214,214)"/><rect x="15.3" y="0.0" width="5.3" height="5.3" fill="rgb(213,213,213)"/><rect x="20.4" y="0.0" width="5.3" height="5.3" fill="rgb(204,204,204)"/><rect x="30.6" y="0.0" width="5.3" height="5.3" fill="rgb(209,209,209)"/><rect x="35.7" y="0.0" width="5.3" height="5.3" fill="rgb(204,204,204)"/><rect x="51.0" y="0.0" width="5.3" height="5.3" fill="rgb(224,224,224)"/><rect x="76.5" y="0.0" width="5.3" height="5.3" fill="rgb(221,221,221)"/><rect x="81.6" y="0.0" width="5.3" height="5.3" fill="rgb(222,222,222)"/><rect x="86.7" y="0.0" width="5.3" height="5.3" fill="rgb(226,226,226)"/><rect x="91.8" y="0.0" width="5.3" height="5.3" fill="rgb(200,200,200)"/><rect x="107.1" y="0.0" width="5.3" height="5.3" fill="rgb(202,202,202)"/><rect x="112.2" y="0.0" width="6.0" height="5.3" fill="rgb(213,213,213)"/><rect x="0.0" y="5.1" width="5.3" height="5.3" fill="rgb(171,171,171)"/><rect x="5.1" y="5.1" width="5.3" height="5.3" fill="rgb(180,180,180)"/><rect x="10.2" y="5.1" width="5.3" height="5.3" fill="rgb(177,177,177)"/><rect x="15.3" y="5.1" width="5.3" height="5.3" fill="rgb(171,171,171)"/><rect x="20.4" y="5.1" width="5.3" height="5.3" fill="rgb(95,95,95)"/><rect x="25.5" y="5.1" width="5.3" height="5.3" fill="rgb(130,130,130)"/><rect x="30.6" y="5.1" width="5.3" height="5.3" fill="rgb(185,185,185)"/><rect x="35.7" y="5.1" width="5.3" height="5.3" fill="rgb(102,102,102)"/><rect x="40.8" y="5.1" width="5.3" height="5.3" fill="rgb(117,117,117)"/><rect x="51.0" y="5.1" width="5.3" height="5.3" fill="rgb(123,123,123)"/><rect x="56.1" y="5.1" width="5.3" height="5.3" fill="rgb(185,185,185)"/><rect x="61.2" y="5.1" width="5.3" height="5.3" fill="rgb(177,177,177)"/><rect x="66.3" y="5.1" width="5.3" height="5.3" fill="rgb(112,112,112)"/><rect x="71.4" y="5.1" width="5.3" height="5.3" fill="rgb(72,72,72)"/><rect x="76.5" y="5.1" width="5.3" height="5.3" fill="rgb(171,171,171)"/><rect x="81.6" y="5.1" width="5.3" height="5.3" fill="rgb(170,170,170)"/><rect x="86.7" y="5.1" width="5.3" height="5.3" fill="rgb(163,163,163)"/><rect x="91.8" y="5.1" width="5.3" height="5.3" fill="rgb(109,109,109)"/><rect x="96.9" y="5.1" width="5.3" height="5.3" fill="rgb(143,143,143)"/><rect x="102.0" y="5.1" width="5.3" height="5.3" fill="rgb(146,146,146)"/><rect x="107.1" y="5.1" width="5.3" height="5.3" fill="rgb(167,167,167)"/><rect x="112.2" y="5.1" width="6.0" height="5.3" fill="rgb(112,112,112)"/><rect x="0.0" y="10.2" width="5.3" height="5.3" fill="rgb(183,183,183)"/><rect x="5.1" y="10.2" width="5.3" height="5.3" fill="rgb(213,213,213)"/><rect x="10.2" y="10.2" width="5.3" height="5.3" fill="rgb(199,199,199)"/><rect x="15.3" y="10.2" width="5.3" height="5.3" fill="rgb(118,118,118)"/><rect x="20.4" y="10.2" width="5.3" height="5.3" fill="rgb(162,162,162)"/><rect x="25.5" y="10.2" width="5.3" height="5.3" fill="rgb(170,170,170)"/><rect x="30.6" y="10.2" width="5.3" height="5.3" fill="rgb(131,131,131)"/><rect x="35.7" y="10.2" width="5.3" height="5.3" fill="rgb(157,157,157)"/><rect x="40.8" y="10.2" width="5.3" height="5.3" fill="rgb(128,128,128)"/><rect x="51.0" y="10.2" width="5.3" height="5.3" fill="rgb(203,203,203)"/><rect x="56.1" y="10.2" width="5.3" height="5.3" fill="rgb(204,204,204)"/><rect x="61.2" y="10.2" width="5.3" height="5.3" fill="rgb(199,199,199)"/><rect x="66.3" y="10.2" width="5.3" height="5.3" fill="rgb(205,205,205)"/><rect x="71.4" y="10.2" width="5.3" height="5.3" fill="rgb(212,212,212)"/><rect x="76.5" y="10.2" width="5.3" height="5.3" fill="rgb(204,204,204)"/><rect x="81.6" y="10.2" width="5.3" height="5.3" fill="rgb(202,202,202)"/><rect x="86.7" y="10.2" width="5.3" height="5.3" fill="rgb(155,155,155)"/><rect x="91.8" y="10.2" width="5.3" height="5.3" fill="rgb(188,188,188)"/><rect x="96.9" y="10.2" width="5.3" height="5.3" fill="rgb(179,179,179)"/><rect x="102.0" y="10.2" width="5.3" height="5.3" fill="rgb(213,213,213)"/><rect x="107.1" y="10.2" width="5.3" height="5.3" fill="rgb(200,200,200)"/><rect x="112.2" y="10.2" width="6.0" height="5.3" fill="rgb(170,170,170)"/></svg>
<svg style="left:1515.85px;top:820.10px" width="11" height="7" viewBox="0 0 11 7" fill="none" stroke="#222" stroke-width="1.2" stroke-linecap="round" stroke-linejoin="round"><path d="M1 1 L5.5 5.6 L10 1"/></svg>
<!-- chat bubble -->
<div class="abs" style="left:1525.4px;top:781.2px;width:56px;height:56px;border-radius:50%;background:#4a76c6;box-shadow:0 2px 8px rgba(0,0,0,.22);z-index:8"></div>
<svg style="left:1535px;top:792px;z-index:9" width="38" height="34" viewBox="1535 792 38 34">
  <rect x="1545.2" y="795.5" width="23.4" height="17.6" rx="6.2" fill="#fff"/>
  <path d="M1545.6 798.7 H1557 Q1563.8 798.7 1563.8 805.4 V812.2 Q1563.8 818.9 1557 818.9 H1554.2 L1551.6 822.9 L1548.6 818.9 H1545.6 Q1538.7 818.9 1538.7 812.2 V805.4 Q1538.7 798.7 1545.6 798.7 Z" fill="#fff" stroke="#4a76c6" stroke-width="1.3"/>
</svg>
<!-- feedback icon -->
<svg style="left:1544px;top:875px" width="24" height="22" viewBox="0 0 24 22" fill="none" stroke="#969ca6" stroke-width="1.4" stroke-linecap="round" stroke-linejoin="round">
  <path d="M2.2 9.4 L13.6 2 L17 14.2 L4.6 15.4 Q2.4 15.4 1.8 13.2 Q1.2 10.6 2.2 9.4 Z"/>
  <path d="M5.4 9 L6.8 15.2 M6.4 15.4 L8.2 19.8 L10.2 19 L9.2 15.2"/>
  <path d="M17.6 3.6 L19.6 2.4 M18.8 7.4 L21.2 6.8 M19.4 11 L21.6 11.6"/>
</svg>
</div>
<div id="txt"><div class="t" style="left:204px;transform:translateX(0.927px) scaleX(1.1185);top:17.20px;font-size:10.5px;color:#ffffff;font-weight:bold;">9+</div>
<div class="t" style="left:42px;transform:translateX(0.110px) scaleX(1.1052);top:62.10px;font-size:9.6px;color:#ececec;font-weight:bold;">FLIPPERS</div>
<div class="t" style="left:52px;transform:translateX(0.149px) scaleX(0.9798);top:123.80px;font-size:14.4px;color:#ffffff;-webkit-text-stroke:0.35px #ffffff;">Marketplace</div>
<div class="t" style="left:52px;transform:translateX(0.195px) scaleX(0.9824);top:157.20px;font-size:14.4px;color:#ffffff;-webkit-text-stroke:0.35px #ffffff;">Buying</div>
<div class="t" style="left:52px;transform:translateX(0.067px) scaleX(0.9504);top:190.90px;font-size:14.4px;color:#eaa93f;-webkit-text-stroke:0.35px #eaa93f;">Selling</div>
<div class="t" style="left:173px;transform:translateX(0.947px) scaleX(1.0000);top:190.80px;font-size:11.5px;color:#ffffff;font-weight:bold;">1</div>
<div class="t" style="left:52px;transform:translateX(0.071px) scaleX(0.9690);top:226.00px;font-size:14px;color:#a4a8ac;-webkit-text-stroke:0.18px #a4a8ac;">Listing Submissions</div>
<div class="t" style="left:52px;transform:translateX(0.202px) scaleX(1.0303);top:263.80px;font-size:14px;color:#ffffff;-webkit-text-stroke:0.35px #ffffff;">Offers</div>
<div class="t" style="left:52px;transform:translateX(0.065px) scaleX(0.9751);top:301.10px;font-size:14px;color:#a4a8ac;-webkit-text-stroke:0.18px #a4a8ac;">Upcoming Calls</div>
<div class="t" style="left:51px;transform:translateX(0.907px) scaleX(1.0107);top:338.00px;font-size:14px;color:#a4a8ac;-webkit-text-stroke:0.18px #a4a8ac;">Valuations</div>
<div class="t" style="left:52px;transform:translateX(0.223px) scaleX(0.9336);top:376.00px;font-size:14px;color:#a4a8ac;-webkit-text-stroke:0.18px #a4a8ac;">Resources</div>
<div class="t" style="left:52px;transform:translateX(0.355px) scaleX(1.0089);top:411.20px;font-size:14.4px;color:#ffffff;-webkit-text-stroke:0.35px #ffffff;">Wallet</div>
<div class="t" style="left:52px;transform:translateX(0.204px) scaleX(0.9181);top:444.80px;font-size:14.4px;color:#ffffff;-webkit-text-stroke:0.35px #ffffff;">Messages</div>
<div class="t" style="left:19px;transform:translateX(0.765px) scaleX(0.9033);top:547.10px;font-size:12.1px;color:#ffffff;">JS</div>
<div class="t" style="left:51px;transform:translateX(0.779px) scaleX(0.9585);top:546.20px;font-size:14.4px;color:#ffffff;-webkit-text-stroke:0.35px #ffffff;">John Smith</div>
<div class="t" style="left:14px;transform:translateX(0.312px) scaleX(0.8993);top:631.40px;font-size:15.4px;color:#ffffff;font-weight:bold;">Begin your journey!</div>
<div class="t" style="left:14px;transform:translateX(0.631px) scaleX(0.9703);top:667.30px;font-size:13.6px;color:#ffffff;-webkit-text-stroke:0.35px #ffffff;">1/2 Completed</div>
<div class="t" style="left:174px;transform:translateX(0.972px) scaleX(0.9625);top:667.30px;font-size:13.6px;color:#ffffff;-webkit-text-stroke:0.35px #ffffff;">View</div>
<div class="t" style="left:35px;transform:translateX(0.057px) scaleX(0.9561);top:719.20px;font-size:15.5px;color:#ffffff;">Close</div>
<div class="t" style="left:265px;transform:translateX(0.141px) scaleX(0.8881);top:25.80px;font-size:30.8px;color:#0b0b0b;font-weight:bold;">Selling</div>
<div class="t" style="left:264px;transform:translateX(0.527px) scaleX(0.9582);top:79.80px;font-size:17.2px;color:#858c98;-webkit-text-stroke:0.18px #858c98;">Listing Submissions</div>
<div class="t" style="left:423px;transform:translateX(0.502px) scaleX(1.0000);top:79.60px;font-size:10.5px;color:#f1f2f4;font-weight:bold;">1</div>
<div class="t" style="left:450px;transform:translateX(0.887px) scaleX(1.0257);top:79.80px;font-size:17.2px;color:#3f6dc9;-webkit-text-stroke:0.18px #3f6dc9;">Offers</div>
<div class="t" style="left:512px;transform:translateX(0.126px) scaleX(0.9667);top:79.80px;font-size:17.2px;color:#858c98;-webkit-text-stroke:0.18px #858c98;">Upcoming Calls</div>
<div class="t" style="left:643px;transform:translateX(0.320px) scaleX(0.9851);top:79.80px;font-size:17.2px;color:#858c98;-webkit-text-stroke:0.18px #858c98;">Valuations</div>
<div class="t" style="left:734px;transform:translateX(0.840px) scaleX(0.9254);top:79.80px;font-size:17.2px;color:#858c98;-webkit-text-stroke:0.18px #858c98;">Resources</div>
<div class="t" style="left:1403px;transform:translateX(0.386px) scaleX(0.8720);top:27.80px;font-size:16.6px;color:#ffffff;font-weight:bold;">Set up Call Slots</div>
<div class="t" style="left:347px;transform:translateX(0.406px) scaleX(0.9736);top:152.00px;font-size:15px;color:#80868f;-webkit-text-stroke:0.35px #80868f;">$27.8K Per Month SaaS Site in the Real Estate Niche</div>
<div class="t" style="left:701px;transform:translateX(0.343px) scaleX(1.0820);top:152.00px;font-size:15px;color:#8c929b;">($342,910)</div>
<div class="t" style="left:1386px;transform:translateX(0.443px) scaleX(0.9056);top:151.20px;font-size:15px;color:#151515;font-weight:bold;">Listing Pending Sold</div>
<div class="t" style="left:318px;transform:translateX(0.199px) scaleX(0.9442);top:199.00px;font-size:15.6px;color:#2b5299;-webkit-text-stroke:0.18px #2b5299;">There is 1 offer under review by Empire Flippers.</div>
<div class="t" style="left:305px;transform:translateX(0.678px) scaleX(0.9333);top:256.80px;font-size:15.1px;color:#151515;font-weight:bold;">Accepted Offers</div>
<div class="t" style="left:337px;transform:translateX(0.104px) scaleX(0.9884);top:314.00px;font-size:15.6px;color:#151515;">$342,910</div>
<div class="t" style="left:596px;transform:translateX(0.459px) scaleX(0.9700);top:313.60px;font-size:15.4px;color:#1a1a1a;-webkit-text-stroke:0.18px #1a1a1a;">7th Sep 2023</div>
<div class="t" style="left:689px;transform:translateX(0.379px) scaleX(0.9955);top:313.60px;font-size:15.4px;color:#787878;">6:24 PM</div>
<div class="t" style="left:793px;transform:translateX(0.721px) scaleX(0.9775);top:313.60px;font-size:13.1px;color:#4cae4f;">Final</div>
<div class="t" style="left:1379px;transform:translateX(0.146px) scaleX(0.9588);top:313.80px;font-size:16.1px;color:#ffffff;font-weight:bold;">View Offer Details</div>
<div class="t" style="left:284px;transform:translateX(0.185px) scaleX(0.9198);top:373.90px;font-size:15.2px;color:#151515;font-weight:bold;">Offers Received</div>
<div class="t" style="left:1443px;transform:translateX(0.234px) scaleX(0.9569);top:877.40px;font-size:14.9px;color:#959ba6;-webkit-text-stroke:0.18px #959ba6;">Give Feedback</div>
<div class="t" style="left:311px;transform:translateX(0.200px) scaleX(1.0000);top:420.00px;font-size:10.8px;color:#ffffff;">DD</div>
<div class="t" style="left:1387px;transform:translateX(0.694px) scaleX(1.0308);top:419.95px;font-size:15px;color:#151515;-webkit-text-stroke:0.18px #151515;">Current offer:</div>
<div class="t" style="left:1480px;transform:translateX(0.179px) scaleX(1.1341);top:419.95px;font-size:15px;color:#151515;font-weight:bold;">N/A</div>
<div class="t" style="left:311px;transform:translateX(0.290px) scaleX(1.0000);top:485.00px;font-size:10.8px;color:#ffffff;">OP</div>
<div class="t" style="left:1387px;transform:translateX(0.694px) scaleX(1.0308);top:484.80px;font-size:15px;color:#151515;-webkit-text-stroke:0.18px #151515;">Current offer:</div>
<div class="t" style="left:1480px;transform:translateX(0.179px) scaleX(1.1341);top:484.80px;font-size:15px;color:#151515;font-weight:bold;">N/A</div>
<div class="t" style="left:310px;transform:translateX(0.849px) scaleX(1.0000);top:550.00px;font-size:10.8px;color:#ffffff;">MR</div>
<div class="t" style="left:1387px;transform:translateX(0.694px) scaleX(1.0308);top:550.80px;font-size:15px;color:#151515;-webkit-text-stroke:0.18px #151515;">Current offer:</div>
<div class="t" style="left:1480px;transform:translateX(0.179px) scaleX(1.1341);top:550.80px;font-size:15px;color:#151515;font-weight:bold;">N/A</div>
<div class="t" style="left:310px;transform:translateX(0.616px) scaleX(1.0000);top:616.00px;font-size:10.8px;color:#ffffff;">MC</div>
<div class="t" style="left:1387px;transform:translateX(0.694px) scaleX(1.0308);top:615.95px;font-size:15px;color:#151515;-webkit-text-stroke:0.18px #151515;">Current offer:</div>
<div class="t" style="left:1480px;transform:translateX(0.179px) scaleX(1.1341);top:615.95px;font-size:15px;color:#151515;font-weight:bold;">N/A</div>
<div class="t" style="left:314px;transform:translateX(0.204px) scaleX(1.0000);top:681.00px;font-size:10.8px;color:#ffffff;">SI</div>
<div class="t" style="left:1387px;transform:translateX(0.694px) scaleX(1.0308);top:680.80px;font-size:15px;color:#151515;-webkit-text-stroke:0.18px #151515;">Current offer:</div>
<div class="t" style="left:1480px;transform:translateX(0.179px) scaleX(1.1341);top:680.80px;font-size:15px;color:#151515;font-weight:bold;">N/A</div>
<div class="t" style="left:1387px;transform:translateX(0.694px) scaleX(1.0308);top:746.80px;font-size:15px;color:#151515;-webkit-text-stroke:0.18px #151515;">Current offer:</div>
<div class="t" style="left:1480px;transform:translateX(0.179px) scaleX(1.1341);top:746.80px;font-size:15px;color:#151515;font-weight:bold;">N/A</div>
<div class="t" style="left:311px;transform:translateX(0.100px) scaleX(1.0000);top:811.00px;font-size:10.8px;color:#ffffff;">GK</div>
<div class="t" style="left:1387px;transform:translateX(0.694px) scaleX(1.0308);top:811.80px;font-size:15px;color:#151515;-webkit-text-stroke:0.18px #151515;">Current offer:</div>
<div class="t" style="left:1480px;transform:translateX(0.179px) scaleX(1.1341);top:811.80px;font-size:15px;color:#151515;font-weight:bold;">N/A</div></div>
<div class="abs" style="left:237px;top:1px;width:1360px;height:3px;background:linear-gradient(180deg,#f6f8fa 0,#f4f6f8 45%,#edf0f3 100%);z-index:39"></div>
<div class="abs" style="left:237px;top:898px;width:1360px;height:1px;background:#f4f5f7;z-index:39"></div>
<div class="abs" style="left:0;top:898px;width:234px;height:1px;background:#565656;z-index:39"></div>
<div class="abs" style="left:1596px;top:0;width:1px;height:899px;background:#e7e9ec;z-index:40"></div>
<div id="topline"></div>
<div id="rightstrip"></div>
</body>
</html>
